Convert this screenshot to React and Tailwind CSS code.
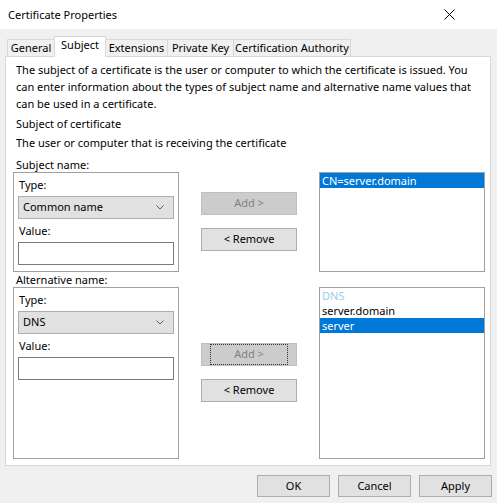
import React from "react";

const font = { fontFamily: '"Segoe UI", "Noto Sans", sans-serif' };

const Chevron = () => (
  <svg width="8" height="5" viewBox="0 0 8 5" className="shrink-0">
    <path d="M0.5 0.5 L4 4 L7.5 0.5" fill="none" stroke="#5f5f5f" strokeWidth="1" />
  </svg>
);

const Select = ({ value }) => (
  <div className="mt-[3px] h-[23px] border border-[#adadad] bg-[#e1e1e1] flex items-center justify-between pl-[4px] pr-[9px]">
    <span>{value}</span>
    <Chevron />
  </div>
);

const GroupBox = ({ value, height }) => (
  <div className={`w-[166px] border border-[#a0a0a0] bg-white px-[4px] pt-[4px] ${height}`}>
    <div className="h-[16px] leading-[16px] pl-[1px]">Type:</div>
    <Select value={value} />
    <div className="mt-[4px] h-[16px] leading-[16px] pl-[1px]">Value:</div>
    <div className="mt-[3px] h-[23px] border border-[#7a7a7a] bg-white" />
  </div>
);

const Button = ({ children, disabled, focus, className = "" }) => (
  <div
    className={`h-[23px] flex items-center justify-center border ${
      disabled
        ? "bg-[#cccccc] border-[#bfbfbf] text-[#838383]"
        : "bg-[#e1e1e1] border-[#adadad] text-black"
    } ${className}`}
  >
    {focus ? (
      <div className="w-[78px] h-[21px] border border-dotted border-[#333] flex items-center justify-center">
        {children}
      </div>
    ) : (
      children
    )}
  </div>
);

const ListBox = ({ items, height }) => (
  <div className={`w-[166px] border border-[#a0a0a0] bg-white ${height}`}>
    {items.map((it, i) => (
      <div
        key={i}
        className={`h-[15px] leading-[15px] px-[2px] ${
          it.selected ? "bg-[#0078d7] text-white" : it.muted ? "text-[#99cfee]" : "text-black"
        }`}
      >
        {it.text}
      </div>
    ))}
  </div>
);

const tabs = [
  { name: "General", w: "w-[47px]", cls: "border-l border-t" },
  { name: "Subject", w: "w-[52px]", selected: true },
  { name: "Extensions", w: "w-[62px]", cls: "border-t border-r" },
  { name: "Private Key", w: "w-[66px]", cls: "border-t border-r" },
  { name: "Certification Authority", w: "w-[117px]", cls: "border-t border-r" },
];

export default function App() {
  return (
    <div
      className="w-[497px] h-[503px] bg-[#f0f0f0] flex flex-col text-[11px] text-black overflow-hidden whitespace-nowrap"
      style={font}
    >
      {/* Title bar */}
      <div className="h-[29px] bg-white flex items-center justify-between pl-[8px] pr-[42px] shrink-0">
        <span className="leading-none">Certificate Properties</span>
        <svg width="11" height="11" viewBox="0 0 11 11">
          <path d="M0.5 0.5 L10.5 10.5 M10.5 0.5 L0.5 10.5" stroke="#000" strokeWidth="1" />
        </svg>
      </div>

      {/* Tabs */}
      <div className="mt-[7px] pl-[7px] h-[20px] flex items-end relative z-10 shrink-0">
        {tabs.map((t) =>
          t.selected ? (
            <div
              key={t.name}
              className={`${t.w} h-[21px] -mb-px bg-white border-l border-t border-r border-[#d9d9d9] flex items-center justify-center pb-[4px]`}
            >
              {t.name}
            </div>
          ) : (
            <div
              key={t.name}
              className={`${t.w} h-[17px] border-[#d9d9d9] ${t.cls} flex items-center justify-center`}
            >
              {t.name}
            </div>
          )
        )}
      </div>

      {/* Panel */}
      <div className="ml-[5px] w-[486px] h-[410px] bg-white border border-[#d9d9d9] shrink-0">
        <div className="px-[10px] pt-[4px] leading-[17px]">
          The subject of a certificate is the user or computer to which the certificate is issued. You
          <br />
          can enter information about the types of subject name and alternative name values that
          <br />
          can be used in a certificate.
        </div>
        <div className="px-[10px] mt-[3px] leading-[17px]">Subject of certificate</div>
        <div className="px-[10px] mt-[2px] leading-[17px]">The user or computer that is receiving the certificate</div>
        <div className="px-[10px] mt-[6px] h-[15px] leading-[15px]">Subject name:</div>

        <div className="flex ml-[7px]">
          <GroupBox value="Common name" height="h-[100px]" />
          <div className="ml-[22px] w-[96px] pt-[20px] flex flex-col gap-[13px]">
            <Button disabled>Add &gt;</Button>
            <Button>&lt; Remove</Button>
          </div>
          <div className="ml-[22px]">
            <ListBox height="h-[100px]" items={[{ text: "CN=server.domain", selected: true }]} />
          </div>
        </div>

        <div className="px-[10px] h-[15px] leading-[15px]">Alternative name:</div>

        <div className="flex ml-[7px]">
          <GroupBox value="DNS" height="h-[172px]" />
          <div className="ml-[22px] w-[96px] pt-[56px] flex flex-col gap-[13px]">
            <Button disabled focus>Add &gt;</Button>
            <Button>&lt; Remove</Button>
          </div>
          <div className="ml-[22px]">
            <ListBox
              height="h-[172px]"
              items={[
                { text: "DNS", muted: true },
                { text: "server.domain" },
                { text: "server", selected: true },
              ]}
            />
          </div>
        </div>
      </div>

      {/* Dialog buttons */}
      <div className="mt-[9px] pr-[5px] flex justify-end gap-[8px]">
        <Button className="w-[73px] !h-[22px]">OK</Button>
        <Button className="w-[73px] !h-[22px]">Cancel</Button>
        <Button className="w-[73px] !h-[22px]">Apply</Button>
      </div>
    </div>
  );
}
